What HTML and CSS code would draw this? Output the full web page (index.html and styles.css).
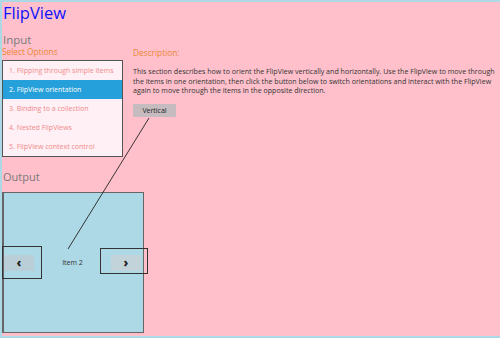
FILE: index.html
```html
<!DOCTYPE html>
<html>
<head>
<meta charset="utf-8">
<link rel="stylesheet" href="styles.css">
</head>
<body>
<div class="page">
  <h1 class="title">FlipView</h1>
  <h2 class="section">Input</h2>
  <div class="input-row">
    <div class="options">
      <div class="label">Select Options</div>
      <ul class="list">
        <li>1. Flipping through simple items</li>
        <li class="selected">2. FlipView orientation</li>
        <li>3. Binding to a collection</li>
        <li>4. Nested FlipViews</li>
        <li>5. FlipView context control</li>
      </ul>
    </div>
    <div class="desc">
      <div class="label">Description:</div>
      <p class="text">This section describes how to orient the FlipView vertically and horizontally. Use the FlipView to move through the items in one orientation, then click the button below to switch orientations and interact with the FlipView again to move through the items in the opposite direction.</p>
      <button class="btn">Vertical</button>
    </div>
  </div>
  <h2 class="section output">Output</h2>
  <div class="flipview">
    <span class="item">Item 2</span>
    <div class="nav prev"><span class="navbtn">&#8249;</span></div>
    <div class="nav next"><span class="navbtn">&#8250;</span></div>
  </div>
  <svg class="annot" width="500" height="338" viewBox="0 0 500 338"><line x1="149" y1="118" x2="68" y2="249" stroke="#222" stroke-width="0.9"/></svg>
</div>
</body>
</html>
```
FILE: styles.css
```css
html, body { margin: 0; padding: 0; }
body { background: #add8e6; width: 500px; height: 338px; overflow: hidden; font-family: "Open Sans", "Noto Sans", sans-serif; }
.page { position: relative; margin: 2px 0 0 2px; height: 334px; background: #ffc0cb; padding-left: 1px; box-sizing: border-box; }
.title { margin: 0; font-weight: normal; font-size: 16.5px; line-height: 20px; color: #1010ff; padding-top: 1px; }
.section { margin: 10px 0 0; font-weight: normal; font-size: 11.5px; line-height: 14px; color: #7a7a7a; }
.input-row { display: flex; gap: 10px; }
.options { width: 121px; margin-left: -1px; }
.label { color: #ec8633; font-size: 8.3px; line-height: 10px; }
.desc .label { padding-top: 1px; }
.list { list-style: none; margin: 3px 0 0; padding: 0; border: 1px solid #555; background: #fff0f5; }
.list li { height: 19px; line-height: 19px; font-size: 7px; color: #f08a8a; padding-left: 6px; white-space: nowrap; }
.list li.selected { background: #26a0da; color: #fff; }
.desc { flex: 1; }
.text { margin: 9px 0 0; font-size: 7.1px; line-height: 9.5px; color: #333; padding-right: 2px; }
.btn { display: block; margin-top: 8px; border: none; background: #c6bcc0; font-family: inherit; font-size: 7px; color: #222; width: 43px; height: 13px; padding: 0; }
.output { margin-top: 13px; font-size: 11px; }
.flipview { position: relative; margin: 8px 0 0 -1px; width: 139px; height: 139px; border: 1px solid #666; border-left-width: 2px; background: #add8e6; display: flex; align-items: center; justify-content: center; }
.item { font-size: 7px; color: #333; margin-left: -2px; }
.nav { position: absolute; border: 1px solid #333; box-sizing: border-box; display: flex; align-items: center; }
.prev { left: -2px; top: 53px; width: 40px; height: 33px; padding-left: 1px; }
.next { left: 96px; top: 55px; width: 48px; height: 26px; padding-left: 10px; padding-top: 3px; }
.navbtn { width: 30px; height: 16px; background: #b9ced6; color: #222; font-size: 12px; line-height: 15px; text-align: center; font-weight: 800; }
.next .navbtn { background: #c2d3da; }
.annot { position: absolute; left: -2px; top: -2px; pointer-events: none; }
```
